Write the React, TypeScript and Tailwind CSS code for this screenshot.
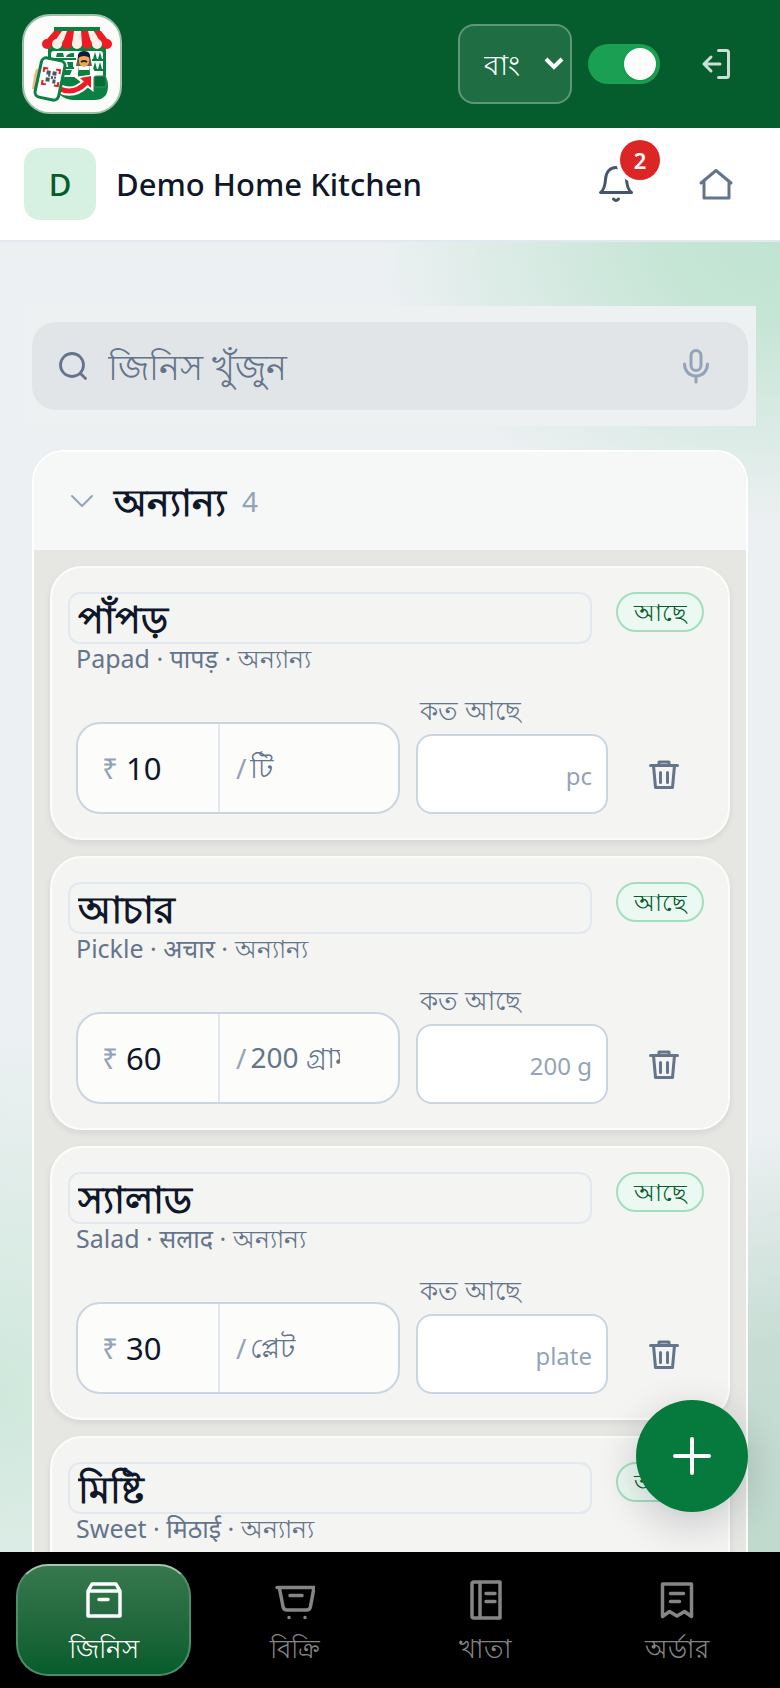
import { useState } from "react";

const items = [
  { id: "papad", name: "পাঁপড়", alt: "Papad · पापड़ · অন্যান্য", price: "10", unit: "টি", stockUnit: "pc" },
  { id: "pickle", name: "আচার", alt: "Pickle · अचार · অন্যান্য", price: "60", unit: "200 গ্রাম", stockUnit: "200 g" },
  { id: "salad", name: "স্যালাড", alt: "Salad · सलाद · অন্যান্য", price: "30", unit: "প্লেট", stockUnit: "plate" },
  { id: "sweet", name: "মিষ্টি", alt: "Sweet · मिठाई · অন্যান্য", price: "40", unit: "টি", stockUnit: "pc" },
];

type Item = (typeof items)[number];

const stroke = {
  fill: "none",
  stroke: "currentColor",
  strokeLinecap: "round",
  strokeLinejoin: "round",
} as const;

function Logo() {
  return (
    <svg viewBox="0 0 96 96" className="h-full w-full" aria-label="Shop logo" role="img">
      <rect x="30" y="11" width="46" height="6" fill="#0b8043" />
      <path d="M24 28h58v34q2 2 2 8 0 14-14 14H50q-8 0-14-5l-12-20z" fill="#0b8043" />
      <rect x="27" y="35" width="52" height="26" rx="3" fill="#fbfcfa" />
      <path d="M32 41l1-4h6l1 4zM42 41q1-4 8-4v4zM34 51v-5h7v5zM43 46h6v7h-4zM40 59v-5h8l-2 5z" fill="#0b8043" />
      <path d="M69 43l2-7 2 7zM74 43l2-7 2 7zM69 53l2-7 2 7zM74 53l2-7 2 7z" fill="#0b8043" />
      <path d="M31 43h21M34 52h16M68 44h11M68 54h11" stroke="#0b8043" strokeWidth="2" />
      <path d="M48 61q0-10 8-12h8q7 2 8 12z" fill="#fff" />
      <path d="M54 40h12l2 10H52z" fill="#6f5a50" />
      <path d="M55 40q0-3 5-3t5 3v5q0 5-5 6-5-1-5-6z" fill="#f2a65a" />
      <path d="M54 42q-1-7 6-7t6 7q-6-4-12 0z" fill="#0f1b3d" />
      <path d="M57 46q3-2 6 0" stroke="#3b2314" strokeWidth="2" fill="none" />
      <path d="M55 49v5h10v-5l1 8v6H54v-6z" fill="#0b8043" />
      <rect x="70" y="60" width="12" height="11" rx="2" fill="#066b35" stroke="#2c995f" />
      <path d="M30 15h8L33 29H18z" fill="#ed1c24" />
      <path d="M38 15h7l-2 14H28z" fill="#fbf0e8" />
      <path d="M43 15h8l-3 14H38z" fill="#ed1c24" />
      <path d="M50 15h8v14H48z" fill="#fbf0e8" />
      <path d="M57 15h7l4 14H58z" fill="#ed1c24" />
      <path d="M64 15h6l8 14H68z" fill="#fbf0e8" />
      <path d="M70 15h7l11 14H78z" fill="#ed1c24" />
      <circle cx="23" cy="28" r="5" fill="#ed1c24" />
      <circle cx="33" cy="28" r="5" fill="#fbf0e8" />
      <circle cx="43" cy="28" r="5" fill="#ed1c24" />
      <circle cx="53" cy="28" r="5" fill="#fbf0e8" />
      <circle cx="63" cy="28" r="5" fill="#ed1c24" />
      <circle cx="73" cy="28" r="5" fill="#fbf0e8" />
      <circle cx="83" cy="28" r="5" fill="#ed1c24" />
      <path d="M36 73q14 6 25-5" stroke="#fff" strokeWidth="9" fill="none" />
      <path d="M54 62l14-2v13z" fill="#ed1c24" stroke="#fff" strokeWidth="3" />
      <path d="M36 73q14 6 26-6" stroke="#ed1c24" strokeWidth="5" fill="none" />
      <path d="M56 62l11-2v12z" fill="#ed1c24" />
      <path d="M12 53h6l-4 21-6-1 1-6 1-7z" fill="#f5b57d" />
      <rect
        x="14"
        y="43"
        width="24"
        height="40"
        rx="5"
        transform="rotate(12 26 63)"
        fill="#fff"
        stroke="#0b8043"
        strokeWidth="3"
      />
      <g transform="rotate(8 27 61)">
        <path d="M19 57v-4h4M31 53h4v4M35 65v4h-4M23 69h-4v-4" stroke="#ed1c24" strokeWidth="2" fill="none" />
        <path
          d="M22 55h4v4h-4zM28 55h4v4h-4zM22 62h4v4h-4zM27 60h2v3h-2zM29 63h3v4h-3zM24 59h2v2h-2zM30 60h2v2h-2z"
          fill="#4b5563"
        />
      </g>
    </svg>
  );
}

function LogoutIcon() {
  return (
    <svg viewBox="0 0 36 36" className="size-9" strokeWidth="3" {...stroke}>
      <path d="M20.5 4.500h8q2 0 2 2v23q0 2-2 2h-8M22 18H6M13 11l-7 7 7 7" />
    </svg>
  );
}

function BellIcon() {
  return (
    <svg viewBox="0 0 36 40" className="h-10 w-9" strokeWidth="3" {...stroke}>
      <path d="M2.500 28.500h31c-3-2-4.500-6-5-13C28 8 24 3.500 18 3.500S8 8 7.500 15.500c-.5 7-2 11-5 13zM15.500 35q2.500 3 5 0" />
    </svg>
  );
}

function HomeIcon() {
  return (
    <svg viewBox="0 0 36 36" className="size-9" strokeWidth="3" {...stroke}>
      <path d="M3 17L18 4.500 33 17M6 15v17h25V15" />
    </svg>
  );
}

function SearchIcon() {
  return (
    <svg viewBox="0 0 32 32" className="size-8" strokeWidth="2.800" {...stroke}>
      <circle cx="16" cy="15" r="11.500" />
      <path d="M24.500 23.500l5 5" />
    </svg>
  );
}

function MicIcon() {
  return (
    <svg viewBox="0 0 32 36" className="h-9 w-8" strokeWidth="3" {...stroke}>
      <rect x="11" y="2.500" width="10" height="20" rx="5" />
      <path d="M4.500 16c0 7 5 12 11.500 12s11.500-5 11.500-12M16 28v6" />
    </svg>
  );
}

function TrashIcon() {
  return (
    <svg viewBox="0 0 32 32" className="size-8" strokeWidth="3" {...stroke}>
      <path d="M2.500 7.500h27M5.500 7.500l2 22h17l2-22M11 7V4h10v3M12.500 14.500v10M19.500 14.500v10" />
    </svg>
  );
}

function ItemsIcon() {
  return (
    <svg viewBox="0 0 40 40" className="size-10" strokeWidth="3.500" {...stroke}>
      <path d="M4 11h32v25H4zM4 11l4-7h24l4 7M15 19.500h9" />
    </svg>
  );
}

function CartIcon() {
  return (
    <svg viewBox="0 0 40 40" className="size-10" strokeWidth="3.500" {...stroke}>
      <path d="M2 7.500h37l-3.500 19q-.5 3.500-4 3.500H12q-3.500 0-4-3.500l-3.500-18M15 15.500h12M14 37.500h0M30 37.500h0" />
    </svg>
  );
}

function LedgerIcon() {
  return (
    <svg viewBox="0 0 40 40" className="size-10" strokeWidth="3.500" {...stroke}>
      <path d="M8 2h26v36H8q-2 0-2-2V4q0-2 2-2zM14 2v36M20 13.500h9M20 21.500h9" />
    </svg>
  );
}

function OrderIcon() {
  return (
    <svg viewBox="0 0 40 40" className="size-10" strokeWidth="3.500" {...stroke}>
      <path d="M5.500 4h29v32.500l-7-5-7.500 4.500-7.500-4.500-7 5zM13.500 13.500h13M13.500 21.500h9" />
    </svg>
  );
}

const tabs = [
  { label: "জিনিস", icon: ItemsIcon },
  { label: "বিক্রি", icon: CartIcon },
  { label: "খাতা", icon: LedgerIcon },
  { label: "অর্ডার", icon: OrderIcon },
];

function ItemCard({ item }: { item: Item }) {
  return (
    <li className="rounded-[32px] border-2 border-[#fcfcfb] bg-[#f4f4f2] p-6 shadow-[0_3px_6px_rgba(15,23,42,0.08)]">
      <div className="flex items-start gap-6">
        <div className="min-w-0 flex-1">
          <input
            defaultValue={item.name}
            aria-label="নাম"
            className="-ml-2 block h-13 w-[calc(100%+8px)] rounded-xl border-2 border-[#e2e8f0] bg-transparent px-2 text-[38px] font-bold text-[#0f172a]"
          />
          <p className="text-[25px] leading-7 text-[#64748b]">{item.alt}</p>
        </div>
        <button
          type="button"
          className="flex h-10 w-22 items-center justify-center rounded-full border-2 border-[#a3dfbd] bg-[#ecf9f2] text-2xl font-medium text-[#055c2c]"
        >
          আছে
        </button>
      </div>

      <div className="mt-3.5 flex items-end gap-4">
        <div className="flex h-23 min-w-0 flex-1 rounded-3xl border-2 border-[#cbd5e1] bg-[#fcfcfa]">
          <label className="flex w-[142px] items-center gap-2 border-r-2 border-[#e2e8f0] pl-6">
            <span className="text-[28px] text-[#94a3b8]">₹</span>
            <input
              defaultValue={item.price}
              aria-label="দাম"
              className="w-20 bg-transparent text-[31px] text-[#0f172a]"
            />
          </label>
          <label className="flex min-w-0 flex-1 items-center gap-1 pl-4">
            <span className="text-[28px] text-[#94a3b8]">/</span>
            <input
              defaultValue={item.unit}
              aria-label="একক"
              className="h-16 w-[90px] bg-transparent pt-1 text-[28px] text-[#64748b]"
            />
          </label>
        </div>
        <label className="w-48 text-[#64748b]">
          <span className="block pl-1 text-[26px] leading-12">কত আছে</span>
          <span className="flex h-20 items-center rounded-2xl border-2 border-[#cbd5e1] bg-white pr-3.5">
            <input className="min-w-0 flex-1 bg-transparent pl-4 text-[28px]" />
            <span className="pt-1 text-2xl text-[#94a3b8]">{item.stockUnit}</span>
          </span>
        </label>
        <button
          type="button"
          aria-label="মুছুন"
          className="flex size-20 items-center justify-center text-[#64748b]"
        >
          <TrashIcon />
        </button>
      </div>
    </li>
  );
}

export default function App() {
  const [open, setOpen] = useState(true);
  const [online, setOnline] = useState(true);
  const [active, setActive] = useState(0);

  return (
    <div className="flex h-screen flex-col overflow-hidden bg-[#ecf0f2] font-['Noto_Sans',sans-serif] text-[#0f172a]">
      <header className="flex h-32 shrink-0 items-center bg-[#055c2c] pr-6 pl-[22px]">
        <div className="size-[100px] overflow-hidden rounded-[28px] border-2 border-[#9bbfa9] bg-[#fcfcfa]">
          <Logo />
        </div>
        <div className="ml-auto flex items-center gap-4">
          <div className="relative">
            <select
              aria-label="ভাষা"
              className="h-20 w-[114px] appearance-none rounded-2xl border-2 border-[#5f9777] bg-[#1f6d43] pl-6 text-[28px] font-medium text-white"
            >
              <option>বাং</option>
              <option>EN</option>
            </select>
            <svg
              viewBox="0 0 20 14"
              className="pointer-events-none absolute top-[33px] right-2 h-3.5 w-5"
              fill="none"
              stroke="white"
              strokeWidth="4"
            >
              <path d="M2 2l8 8 8-8" />
            </svg>
          </div>
          <button
            type="button"
            role="switch"
            aria-checked={online}
            aria-label="দোকান খোলা"
            onClick={() => setOnline(!online)}
            className={
              online
                ? "flex h-10 w-18 items-center justify-end rounded-full bg-[#1aa053] px-1"
                : "flex h-10 w-18 items-center justify-start rounded-full bg-[#94a3b8] px-1"
            }
          >
            <span className="size-8 rounded-full bg-[#fcfcfa] shadow-sm" />
          </button>
          <button
            type="button"
            aria-label="লগ আউট"
            className="flex size-20 items-center justify-center text-[#cddfd5]"
          >
            <LogoutIcon />
          </button>
        </div>
      </header>

      <div className="flex h-[114px] shrink-0 items-center border-b-2 border-[#e2e8f0] bg-white px-6">
        <div className="flex size-18 items-center justify-center rounded-2xl bg-[#d6f0e1] text-[31px] font-medium text-[#055c2c]">
          D
        </div>
        <h1 className="ml-5 text-[31px] font-medium">Demo Home Kitchen</h1>
        <div className="ml-auto flex items-center gap-5">
          <button
            type="button"
            aria-label="Notifications"
            className="relative flex size-20 items-center justify-center text-[#475569]"
          >
            <BellIcon />
            <span className="absolute -top-1 -right-1 flex size-10 items-center justify-center rounded-full bg-[#dc2626] text-[22px] font-semibold text-white ring-4 ring-white">
              2
            </span>
          </button>
          <button
            type="button"
            aria-label="Home"
            className="flex size-20 items-center justify-center text-[#64748b]"
          >
            <HomeIcon />
          </button>
        </div>
      </div>

      <main className="min-h-0 flex-1 overflow-y-auto bg-[radial-gradient(ellipse_400px_280px_at_100%_0%,#c1e4d2,#c1e4d2e0_30%,#c1e4d200),radial-gradient(ellipse_300px_360px_at_0%_88%,#cfe8dc,#cfe8dc00),radial-gradient(ellipse_300px_420px_at_100%_100%,#bfd9cd,#bfd9cdd0_50%,#bfd9cd00)] px-6 pt-16 pb-10 [scrollbar-width:none]">
        <div className="bg-[#edf1f2] px-2 py-4">
          <div className="flex h-22 items-center rounded-3xl bg-[#e1e5e7] pr-9 pl-6 text-[#64748b]">
            <SearchIcon />
            <input
              type="search"
              aria-label="জিনিস খুঁজুন"
              placeholder="জিনিস খুঁজুন"
              className="ml-5 h-full min-w-0 flex-1 bg-transparent text-[35px] font-medium placeholder:text-[#64748b]"
            />
            <button type="button" aria-label="ভয়েস" className="text-[#94a3b8]">
              <MicIcon />
            </button>
          </div>
        </div>

        <section className="mx-2 mt-6 overflow-hidden rounded-[32px] border-2 border-white bg-[#e6e7e3]">
          <button
            type="button"
            aria-expanded={open}
            onClick={() => setOpen(!open)}
            className="flex h-[98px] w-full items-center bg-[#f6f8f8] pl-9 text-left"
          >
            <svg viewBox="0 0 24 14" className="h-3.5 w-6 text-[#94a3b8]" strokeWidth="2" {...stroke}>
              <path d="M2 2l10 10L22 2" />
            </svg>
            <span className="ml-5 text-[38px] leading-10 font-bold">অন্যান্য</span>
            <span className="ml-4 text-[28px] text-[#94a3b8]">4</span>
          </button>
          {open && (
            <ul className="flex flex-col gap-4 p-4">
              {items.map((item) => (
                <ItemCard key={item.id} item={item} />
              ))}
            </ul>
          )}
        </section>
      </main>

      <button
        type="button"
        aria-label="নতুন জিনিস"
        className="fixed right-8 bottom-44 flex size-28 items-center justify-center rounded-full bg-[#057a3c] text-white shadow-[0_12px_40px_rgba(15,23,42,0.2)]"
      >
        <svg viewBox="0 0 40 40" className="size-10" strokeWidth="4" {...stroke}>
          <path d="M20 3v34M3 20h34" />
        </svg>
      </button>

      <nav className="grid h-34 shrink-0 grid-cols-4 gap-4 bg-black px-4 py-3">
        {tabs.map(({ label, icon: Icon }, i) => (
          <button
            key={label}
            type="button"
            onClick={() => setActive(i)}
            className={
              i === active
                ? "flex flex-col items-center rounded-[32px] border-2 border-[#4d8d69] border-t-[#a5c4b2] bg-linear-to-b from-[#37784f] to-[#055c2c] pt-3.5 text-white"
                : "flex flex-col items-center rounded-[32px] border-2 border-transparent pt-3.5 text-[#858585]"
            }
          >
            <Icon />
            <span className="mt-2 text-[26px] leading-10 font-medium">{label}</span>
          </button>
        ))}
      </nav>
    </div>
  );
}
